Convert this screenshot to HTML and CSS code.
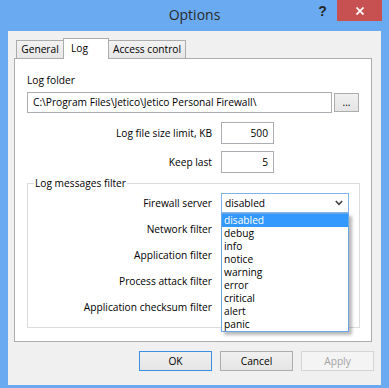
FILE: index.html
```html
<!DOCTYPE html>
<html>
<head>
<meta charset="utf-8">
<title>Options</title>
<link rel="stylesheet" href="styles.css">
</head>
<body>
<div class="window">
  <div class="titlebar">
    <div class="title">Options</div>
    <div class="caption-buttons">
      <div class="help">?</div>
      <div class="close">
        <svg width="8" height="8" viewBox="0 0 8 8"><path d="M0.5 0.5 L7.5 7.5 M7.5 0.5 L0.5 7.5" stroke="#fff" stroke-width="1.8" fill="none"/></svg>
      </div>
    </div>
  </div>
  <div class="client">
    <div class="tabs">
      <div class="tab tab-general">General</div>
      <div class="tab tab-log active">Log</div>
      <div class="tab tab-access">Access control</div>
    </div>
    <div class="panel">
      <div class="caption-label">Log folder</div>
      <div class="folder-row">
        <div class="textbox path">C:\Program Files\Jetico\Jetico Personal Firewall\</div>
        <div class="browse">...</div>
      </div>
      <div class="row">
        <span class="lbl">Log file size limit, KB</span>
        <div class="textbox num">500</div>
      </div>
      <div class="row row-second">
        <span class="lbl">Keep last</span>
        <div class="textbox num">5</div>
      </div>
      <fieldset class="group">
        <legend>Log messages filter</legend>
        <div class="frow">
          <span class="flbl">Firewall server</span>
          <div class="combo">
            <span>disabled</span>
            <svg class="chev" width="8" height="6" viewBox="0 0 8 6"><path d="M0.8 1 L4 4.3 L7.2 1" stroke="#404040" stroke-width="1.6" fill="none"/></svg>
            <div class="droplist">
              <div class="item selected">disabled</div>
              <div class="item">debug</div>
              <div class="item">info</div>
              <div class="item">notice</div>
              <div class="item">warning</div>
              <div class="item">error</div>
              <div class="item">critical</div>
              <div class="item">alert</div>
              <div class="item">panic</div>
            </div>
          </div>
        </div>
        <div class="frow"><span class="flbl">Network filter</span></div>
        <div class="frow"><span class="flbl">Application filter</span></div>
        <div class="frow"><span class="flbl">Process attack filter</span></div>
        <div class="frow"><span class="flbl">Application checksum filter</span></div>
      </fieldset>
    </div>
    <div class="buttons">
      <div class="btn default">OK</div>
      <div class="btn">Cancel</div>
      <div class="btn disabled">Apply</div>
    </div>
  </div>
</div>
</body>
</html>
```
FILE: styles.css
```css
* { box-sizing: border-box; }
html, body { margin: 0; padding: 0; }
body {
  width: 389px;
  height: 388px;
  overflow: hidden;
  background: #6aaaf0;
  font-family: "Open Sans", "Noto Sans", sans-serif;
  font-size: 10.2px;
  color: #000;
}
.window { display: flex; flex-direction: column; height: 388px; }

.titlebar {
  height: 31px;
  display: grid;
  grid-template-columns: 1fr auto 1fr;
  align-items: start;
}
.title {
  grid-column: 2;
  font-size: 14px;
  line-height: 30px;
  color: #2b2b2b;
}
.caption-buttons {
  grid-column: 3;
  justify-self: end;
  display: flex;
  margin-right: 7px;
}
.help {
  width: 29px;
  height: 21px;
  display: flex;
  align-items: center;
  justify-content: center;
  font-family: "Liberation Sans", sans-serif;
  font-weight: bold;
  font-size: 14px;
  color: #262626;
}
.close {
  width: 45px;
  height: 21px;
  background: #c75050;
  display: flex;
  align-items: center;
  justify-content: center;
}

.client {
  margin: 0 8px;
  height: 354px;
  background: #f0f0f0;
  display: flex;
  flex-direction: column;
}

.tabs {
  display: flex;
  align-items: flex-end;
  height: 20px;
  margin: 7px 0 0 8px;
  position: relative;
  z-index: 2;
}
.tab {
  height: 18px;
  border: 1px solid #acacac;
  border-bottom: none;
  background: linear-gradient(#f2f2f2, #e6e6e6);
  line-height: 17px;
  text-align: center;
  margin-left: -1px;
}
.tab-general { width: 48px; margin-left: 0; }
.tab-log { width: 46px; }
.tab-access { width: 78px; }
.tab.active {
  height: 21px;
  margin-bottom: -1px;
  background: #fff;
  line-height: 19px;
  text-align: left;
  padding-left: 7px;
  position: relative;
  z-index: 1;
}

.panel {
  margin-left: 6px;
  width: 358px;
  height: 284px;
  border: 1px solid #acacac;
  background: #fff;
  padding: 14px 11px 0 12px;
  position: relative;
  z-index: 1;
}
.caption-label { line-height: 14px; }
.folder-row {
  display: flex;
  align-items: center;
  gap: 2px;
  margin-top: 5px;
}
.textbox {
  border: 1px solid #abadb3;
  background: #fff;
}
.path {
  width: 305px;
  height: 21px;
  line-height: 19px;
  padding-left: 5px;
  white-space: nowrap;
}
.browse {
  width: 25px;
  height: 19px;
  border: 1px solid #acacac;
  background: linear-gradient(#f0f0f0, #e5e5e5);
  text-align: center;
  line-height: 16px;
}
.row {
  display: flex;
  align-items: center;
  margin-top: 9px;
}
.row-second { margin-top: 7px; }
.lbl {
  width: 185px;
  text-align: right;
  margin-right: 9px;
}
.num {
  width: 53px;
  height: 22px;
  line-height: 20px;
  text-align: right;
  padding-right: 5px;
}

.group {
  margin: 4px 0 0 0;
  padding: 4px 0 10px 0;
  border: 1px solid #dcdcdc;
  width: 333px;
  min-width: 0;
}
.group legend {
  line-height: 12px;
  margin-left: 6px;
  padding: 0 1px;
}
.frow {
  display: flex;
  align-items: center;
  height: 20px;
  margin-top: 6px;
}
.frow:first-of-type { margin-top: 0; }
.flbl {
  width: 184px;
  text-align: right;
  margin-right: 9px;
}
.combo {
  position: relative;
  width: 128px;
  height: 20px;
  border: 1px solid #7eb4ea;
  background: #fff;
  display: flex;
  align-items: center;
  justify-content: space-between;
  padding: 0 5px 0 3px;
  line-height: 18px;
}
.chev { display: block; }
.droplist {
  position: absolute;
  top: 19px;
  left: -1px;
  width: 128px;
  border: 1px solid #6aa6e6;
  background: #fff;
  box-shadow: 3px 3px 3px rgba(0, 0, 0, 0.28);
  z-index: 5;
}
.item {
  height: 13px;
  line-height: 13px;
  padding-left: 2px;
  white-space: nowrap;
}
.item.selected { background: #3399ff; color: #fff; }

.buttons {
  display: flex;
  justify-content: flex-end;
  gap: 8px;
  margin-top: 9px;
  padding-right: 7px;
}
.btn {
  width: 73px;
  height: 20px;
  border: 1px solid #acacac;
  background: linear-gradient(#f0f0f0, #e5e5e5);
  text-align: center;
  line-height: 18px;
}
.btn.default { border-color: #3c8fe0; }
.btn.disabled {
  border-color: #d5d5d5;
  background: #f4f4f4;
  color: #a3a3a3;
}
```
